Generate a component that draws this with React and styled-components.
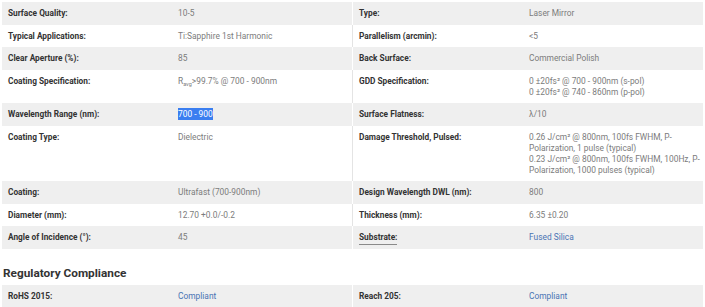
import React from 'react';
import styled, { createGlobalStyle } from 'styled-components';

const Global = createGlobalStyle`
  body {
    margin: 0;
    padding: 2px 2px 0 2px;
    background: #fff;
    font-family: Roboto, "Liberation Sans", sans-serif;
  }
`;

const Table = styled.div`
  display: flex;
  flex-direction: column;
`;

const Row = styled.div`
  display: grid;
  grid-template-columns: 1fr 1fr;
  column-gap: 1px;
  background: ${(p) => (p.shaded ? '#ffffff' : '#e4e4e4')};
`;

const Half = styled.div`
  display: grid;
  grid-template-columns: 170px 1fr;
  background: ${(p) => (p.shaded ? '#efefef' : '#ffffff')};
`;

const Cell = styled.div`
  padding: ${(p) => (p.label ? '6px 6px 5.5px' : '6px 1px 5.5px 6px')};
  font-size: ${(p) => (p.label ? '8.3px' : '8.4px')};
  line-height: 11px;
  color: ${(p) => (p.label ? '#333333' : '#7c7c7c')};
  font-weight: ${(p) => (p.label ? 700 : 400)};
`;

const Link = styled.span`
  color: #4a74b4;
`;

const Marked = styled.span`
  background: #3a7ef0;
  color: #fff;
  padding: 1px 0 1px;
`;

const Dotted = styled.span`
  border-bottom: 1px solid #8a8a8a;
  padding-bottom: 2px;
`;

const Heading = styled.h3`
  margin: 17px 0 5px 1px;
  font-size: 11.8px;
  line-height: 14px;
  font-weight: 700;
  color: #333;
`;

const Sub = styled.sub`
  font-size: 5.5px;
  line-height: 0;
  vertical-align: -1.5px;
`;

const specs = [
  ['Surface Quality:', '10-5', 'Type:', 'Laser Mirror'],
  ['Typical Applications:', 'Ti:Sapphire 1st Harmonic', 'Parallelism (arcmin):', '<5'],
  ['Clear Aperture (%):', '85', 'Back Surface:', 'Commercial Polish'],
  [
    'Coating Specification:',
    <>R<Sub>avg</Sub>&gt;99.7% @ 700 - 900nm</>,
    'GDD Specification:',
    <>0 ±20fs² @ 700 - 900nm (s-pol)<br />0 ±20fs² @ 740 - 860nm (p-pol)</>,
  ],
  ['Wavelength Range (nm):', <Marked>700 - 900</Marked>, 'Surface Flatness:', 'λ/10'],
  [
    'Coating Type:',
    'Dielectric',
    'Damage Threshold, Pulsed:',
    <>
      0.26 J/cm² @ 800nm, 100fs FWHM, P-Polarization, 1 pulse (typical)<br />
      0.23 J/cm² @ 800nm, 100fs FWHM, 100Hz, P-Polarization, 1000 pulses (typical)
    </>,
  ],
  ['Coating:', 'Ultrafast (700-900nm)', 'Design Wavelength DWL (nm):', '800'],
  ['Diameter (mm):', '12.70 +0.0/-0.2', 'Thickness (mm):', '6.35 ±0.20'],
  ['Angle of Incidence (°):', '45', <Dotted>Substrate:</Dotted>, <Link>Fused Silica</Link>],
];

const SpecRow = ({ cells, shaded }) => (
  <Row shaded={shaded}>
    <Half shaded={shaded}>
      <Cell label>{cells[0]}</Cell>
      <Cell>{cells[1]}</Cell>
    </Half>
    <Half shaded={shaded}>
      <Cell label>{cells[2]}</Cell>
      <Cell>{cells[3]}</Cell>
    </Half>
  </Row>
);

export default function App() {
  return (
    <>
      <Global />
      <Table>
        {specs.map((cells, i) => (
          <SpecRow key={i} cells={cells} shaded={i % 2 === 0} />
        ))}
      </Table>
      <Heading>Regulatory Compliance</Heading>
      <Table>
        <SpecRow
          shaded
          cells={['RoHS 2015:', <Link>Compliant</Link>, 'Reach 205:', <Link>Compliant</Link>]}
        />
      </Table>
    </>
  );
}
